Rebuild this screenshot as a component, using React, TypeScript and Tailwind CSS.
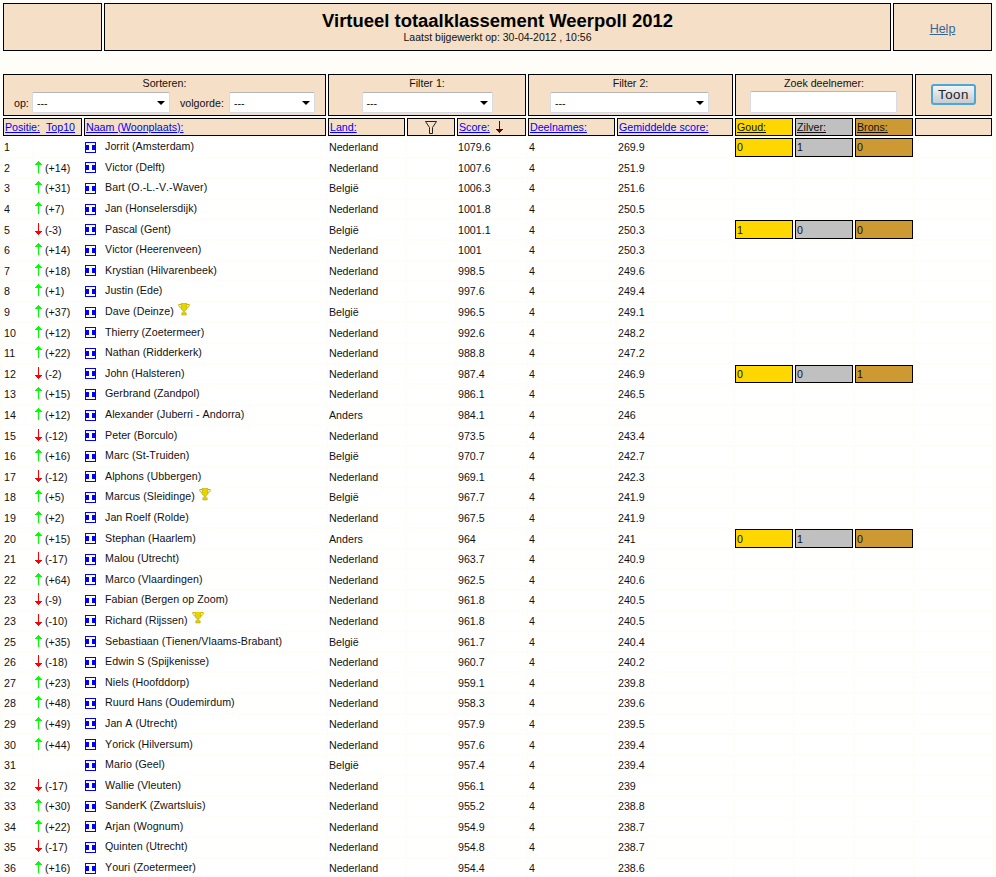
import React from 'react';

type Row = {
  rank: number;
  change?: number;
  name: string;
  land: string;
  score: string;
  avg: string;
  trophy?: boolean;
  medals?: [number, number, number];
};

const NL = 'Nederland';
const BE = 'België';

const ROWS: Row[] = [
  { rank: 1, name: 'Jorrit (Amsterdam)', land: NL, score: '1079.6', avg: '269.9', medals: [0, 1, 0] },
  { rank: 2, change: 14, name: 'Victor (Delft)', land: NL, score: '1007.6', avg: '251.9' },
  { rank: 3, change: 31, name: 'Bart (O.-L.-V.-Waver)', land: BE, score: '1006.3', avg: '251.6' },
  { rank: 4, change: 7, name: 'Jan (Honselersdijk)', land: NL, score: '1001.8', avg: '250.5' },
  { rank: 5, change: -3, name: 'Pascal (Gent)', land: BE, score: '1001.1', avg: '250.3', medals: [1, 0, 0] },
  { rank: 6, change: 14, name: 'Victor (Heerenveen)', land: NL, score: '1001', avg: '250.3' },
  { rank: 7, change: 18, name: 'Krystian (Hilvarenbeek)', land: NL, score: '998.5', avg: '249.6' },
  { rank: 8, change: 1, name: 'Justin (Ede)', land: NL, score: '997.6', avg: '249.4' },
  { rank: 9, change: 37, name: 'Dave (Deinze)', land: BE, score: '996.5', avg: '249.1', trophy: true },
  { rank: 10, change: 12, name: 'Thierry (Zoetermeer)', land: NL, score: '992.6', avg: '248.2' },
  { rank: 11, change: 22, name: 'Nathan (Ridderkerk)', land: NL, score: '988.8', avg: '247.2' },
  { rank: 12, change: -2, name: 'John (Halsteren)', land: NL, score: '987.4', avg: '246.9', medals: [0, 0, 1] },
  { rank: 13, change: 15, name: 'Gerbrand (Zandpol)', land: NL, score: '986.1', avg: '246.5' },
  { rank: 14, change: 12, name: 'Alexander (Juberri - Andorra)', land: 'Anders', score: '984.1', avg: '246' },
  { rank: 15, change: -12, name: 'Peter (Borculo)', land: NL, score: '973.5', avg: '243.4' },
  { rank: 16, change: 16, name: 'Marc (St-Truiden)', land: BE, score: '970.7', avg: '242.7' },
  { rank: 17, change: -12, name: 'Alphons (Ubbergen)', land: NL, score: '969.1', avg: '242.3' },
  { rank: 18, change: 5, name: 'Marcus (Sleidinge)', land: BE, score: '967.7', avg: '241.9', trophy: true },
  { rank: 19, change: 2, name: 'Jan Roelf (Rolde)', land: NL, score: '967.5', avg: '241.9' },
  { rank: 20, change: 15, name: 'Stephan (Haarlem)', land: 'Anders', score: '964', avg: '241', medals: [0, 1, 0] },
  { rank: 21, change: -17, name: 'Malou (Utrecht)', land: NL, score: '963.7', avg: '240.9' },
  { rank: 22, change: 64, name: 'Marco (Vlaardingen)', land: NL, score: '962.5', avg: '240.6' },
  { rank: 23, change: -9, name: 'Fabian (Bergen op Zoom)', land: NL, score: '961.8', avg: '240.5' },
  { rank: 23, change: -10, name: 'Richard (Rijssen)', land: NL, score: '961.8', avg: '240.5', trophy: true },
  { rank: 25, change: 35, name: 'Sebastiaan (Tienen/Vlaams-Brabant)', land: BE, score: '961.7', avg: '240.4' },
  { rank: 26, change: -18, name: 'Edwin S (Spijkenisse)', land: NL, score: '960.7', avg: '240.2' },
  { rank: 27, change: 23, name: 'Niels (Hoofddorp)', land: NL, score: '959.1', avg: '239.8' },
  { rank: 28, change: 48, name: 'Ruurd Hans (Oudemirdum)', land: NL, score: '958.3', avg: '239.6' },
  { rank: 29, change: 49, name: 'Jan A (Utrecht)', land: NL, score: '957.9', avg: '239.5' },
  { rank: 30, change: 44, name: 'Yorick (Hilversum)', land: NL, score: '957.6', avg: '239.4' },
  { rank: 31, name: 'Mario (Geel)', land: BE, score: '957.4', avg: '239.4' },
  { rank: 32, change: -17, name: 'Wallie (Vleuten)', land: NL, score: '956.1', avg: '239' },
  { rank: 33, change: 30, name: 'SanderK (Zwartsluis)', land: NL, score: '955.2', avg: '238.8' },
  { rank: 34, change: 22, name: 'Arjan (Wognum)', land: NL, score: '954.9', avg: '238.7' },
  { rank: 35, change: -17, name: 'Quinten (Utrecht)', land: NL, score: '954.8', avg: '238.7' },
  { rank: 36, change: 16, name: 'Youri (Zoetermeer)', land: NL, score: '954.4', avg: '238.6' },
];

const box = 'border border-black bg-[#f5dfc6]';
const headLink = 'text-[#0000ff] underline';
const medalColors = ['bg-[#ffd700]', 'bg-[#c0c0c0]', 'bg-[#cc9933]'];

const ArrowUp = () => (
  <svg width="7" height="12" viewBox="0 0 7 12" shapeRendering="crispEdges" className="shrink-0">
    <path fill="#00ff00" d="M3 0h1v1h1v1h1v1h1v1H4v8H3V4H0V3h1V2h1V1h1z" />
  </svg>
);

const ArrowDown = ({ color = '#ff0000' }: { color?: string }) => (
  <svg width="7" height="12" viewBox="0 0 7 12" shapeRendering="crispEdges" className="shrink-0">
    <path fill={color} d="M3 0h1v8h3v1H6v1H5v1H4v1H3v-1H2v-1H1V9H0V8h3z" />
  </svg>
);

const NameIcon = () => (
  <svg width="11" height="11" viewBox="0 0 11 11" shapeRendering="crispEdges" className="shrink-0">
    <rect width="11" height="11" fill="#0000ff" />
    <rect x="1" y="1" width="9" height="2" fill="#ffffff" />
    <rect x="1" y="8" width="9" height="2" fill="#ffffff" />
    <rect x="4" y="3" width="3" height="5" fill="#ffffff" />
  </svg>
);

const Trophy = () => (
  <svg width="12" height="13" viewBox="0 0 12 13" className="shrink-0">
    <path fill="#e6d400" stroke="#a89a00" strokeWidth="0.5" d="M3 0.5h6v4.5c0 1.4-1.2 2.4-2.2 2.6v2.2h1.4v2.2H3.8V9.8h1.4V7.6C4.200 7.400 3 6.400 3 5z" />
    <path fill="none" stroke="#c4b400" strokeWidth="1" d="M3 1.500H0.700c0 2 1 3.200 2.600 3.500M9 1.500h2.300c0 2-1 3.200-2.600 3.500" />
  </svg>
);

const Select = ({ className }: { className: string }) => (
  <div className={`flex h-[21px] items-center justify-between rounded-[2px] border border-[#d6dbe3] border-t-[#b5b5b5] bg-white pl-[4px] pr-[4px] ${className}`}>
    <span>---</span>
    <span className="h-0 w-0 border-x-[4px] border-t-[4px] border-x-transparent border-t-black" />
  </div>
);

const Cell = ({ className = '', children }: { className?: string; children?: React.ReactNode }) => (
  <div className={`flex items-center overflow-hidden whitespace-nowrap bg-white pl-[1px] ${className}`}>{children}</div>
);

export default function App() {
  return (
    <div className="h-[877px] overflow-hidden bg-[#fffdf8] px-[3px] pt-[3px] font-['Liberation_Sans',Arial,sans-serif] text-[10.67px] text-[#111]">
      <div className="flex h-[48px] gap-[2px]">
        <div className={`w-[99px] ${box}`} />
        <div className={`flex w-[787px] flex-col items-center pt-[6px] ${box}`}>
          <h1 className="text-[18.45px] leading-[22px] font-bold text-black">Virtueel totaalklassement Weerpoll 2012</h1>
          <p className="text-[10.5px] leading-[10px]">Laatst bijgewerkt op: 30-04-2012 , 10:56</p>
        </div>
        <div className={`flex w-[99px] items-center justify-center pt-[4px] ${box}`}>
          <span className="text-[12.5px] text-[#336699] underline">Help</span>
        </div>
      </div>

      <div className="mt-[23px] grid grid-cols-[29px_48px_242px_77px_48px_69px_87px_116px_58px_58px_58px_77px] auto-rows-[18.6px] gap-x-[2px] gap-y-[2px] [grid-template-rows:42px_18px]">
        <div className={`col-span-3 flex flex-col ${box}`}>
          <div className="pt-[2px] text-center leading-[13px]">Sorteren:</div>
          <div className="mt-[2px] flex items-center">
            <span className="ml-[10px] w-[18px]">op:</span>
            <Select className="w-[138px]" />
            <span className="ml-[10px] w-[49px]">volgorde:</span>
            <Select className="w-[86px]" />
          </div>
        </div>
        <div className={`col-span-3 flex flex-col items-center ${box}`}>
          <div className="pt-[2px] leading-[13px]">Filter 1:</div>
          <Select className="mt-[2px] w-[131px]" />
        </div>
        <div className={`col-span-2 flex flex-col items-center ${box}`}>
          <div className="pt-[2px] leading-[13px]">Filter 2:</div>
          <Select className="mt-[2px] mr-[2px] w-[159px]" />
        </div>
        <div className={`col-span-3 flex flex-col items-center ${box}`}>
          <div className="pt-[2px] leading-[13px]">Zoek deelnemer:</div>
          <div className="mt-[1px] mr-[2px] h-[22px] w-[147px] rounded-[2px] border border-[#d6dbe3] border-t-[#b5b5b5] bg-white" />
        </div>
        <div className={`flex justify-center pt-[9px] ${box}`}>
          <button className="h-[21px] w-[45px] rounded-[3px] border-2 border-[#4aa8d8] bg-gradient-to-b from-[#f4f4f4] to-[#c8ccd0] text-[13.33px] leading-[15px] tracking-[0.5px] text-[#222]">
            Toon
          </button>
        </div>

        <div className={`col-span-2 flex items-center gap-[6px] pl-[1px] ${box}`}>
          <span className={headLink}>Positie:</span>
          <span className={headLink}>Top10</span>
        </div>
        <div className={`flex items-center pl-[1px] ${box}`}><span className={headLink}>Naam (Woonplaats):</span></div>
        <div className={`flex items-center pl-[1px] ${box}`}><span className={headLink}>Land:</span></div>
        <div className={`flex items-center justify-center ${box}`}>
          <svg width="12" height="13" viewBox="0 0 12 13" fill="none" stroke="#222" strokeWidth="1">
            <path d="M0.500 0.500h11L7.500 6.500v6h-3v-6z" />
          </svg>
        </div>
        <div className={`flex items-center gap-[6px] pl-[1px] ${box}`}>
          <span className={headLink}>Score:</span>
          <ArrowDown color="#660000" />
        </div>
        <div className={`flex items-center pl-[1px] ${box}`}><span className={headLink}>Deelnames:</span></div>
        <div className={`flex items-center pl-[1px] ${box}`}><span className={headLink}>Gemiddelde score:</span></div>
        <div className={`flex items-center border border-black pl-[1px] underline ${medalColors[0]}`}>Goud:</div>
        <div className={`flex items-center border border-black pl-[1px] underline ${medalColors[1]}`}>Zilver:</div>
        <div className={`flex items-center border border-black pl-[1px] underline ${medalColors[2]}`}>Brons:</div>
        <div className={box} />

        {ROWS.map((row, i) => (
          <React.Fragment key={i}>
            <Cell><span>{row.rank}</span></Cell>
            <Cell className="gap-[3px] pb-[2px]">
              {row.change !== undefined && (row.change > 0 ? <ArrowUp /> : <ArrowDown />)}
              {row.change !== undefined && (
                <span className="pt-[2px]">({row.change > 0 ? `+${row.change}` : row.change})</span>
              )}
            </Cell>
            <Cell className="pl-[1px]">
              <NameIcon />
              <span className="mb-[2px] ml-[9px] tracking-[0.05px] [font-kerning:none]">{row.name}</span>
              {row.trophy && <span className="mb-[6px] ml-[4px]"><Trophy /></span>}
            </Cell>
            <Cell><span>{row.land}</span></Cell>
            <Cell />
            <Cell><span>{row.score}</span></Cell>
            <Cell><span>4</span></Cell>
            <Cell><span>{row.avg}</span></Cell>
            {row.medals ? (
              row.medals.map((m, j) => (
                <div key={j} className={`flex items-center border border-black pl-[1px] ${medalColors[j]}`}>{m}</div>
              ))
            ) : (
              <>
                <Cell />
                <Cell />
                <Cell />
              </>
            )}
            <Cell />
          </React.Fragment>
        ))}
      </div>
    </div>
  );
}
